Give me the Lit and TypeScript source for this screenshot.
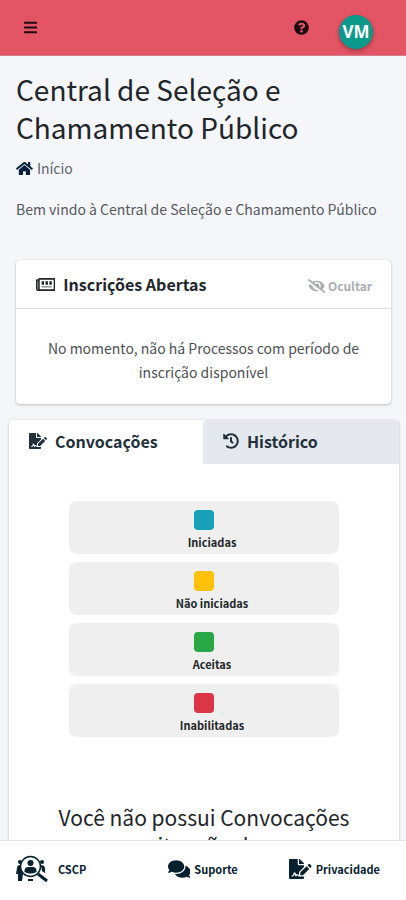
import { LitElement, html, css, svg } from "lit";
import { customElement, property, state } from "lit/decorators.js";
import { classMap } from "lit/directives/class-map.js";

const glyphs: Record<string, [string, string]> = {
  bars: ["0 0 448 512", "M16 132h416c8.837 0 16-7.163 16-16V76c0-8.837-7.163-16-16-16H16C7.163 60 0 67.163 0 76v40c0 8.837 7.163 16 16 16zm0 160h416c8.837 0 16-7.163 16-16v-40c0-8.837-7.163-16-16-16H16c-8.837 0-16 7.163-16 16v40c0 8.837 7.163 16 16 16zm0 160h416c8.837 0 16-7.163 16-16v-40c0-8.837-7.163-16-16-16H16c-8.837 0-16 7.163-16 16v40c0 8.837 7.163 16 16 16z"],
  help: ["0 0 512 512", "M504 256c0 136.997-111.043 248-248 248S8 392.997 8 256C8 119.083 119.043 8 256 8s248 111.083 248 248zM262.655 90c-54.497 0-89.255 22.957-116.549 63.758-3.536 5.286-2.353 12.415 2.715 16.258l34.699 26.31c5.205 3.947 12.621 3.008 16.665-2.122 17.864-22.658 30.113-35.797 57.303-35.797 20.429 0 45.698 13.148 45.698 32.958 0 14.976-12.363 22.667-32.534 33.976C247.128 238.528 216 254.941 216 296v4c0 6.627 5.373 12 12 12h56c6.627 0 12-5.373 12-12v-1.333c0-28.462 83.186-29.647 83.186-106.667 0-58.002-60.165-102-116.531-102zM256 338c-25.365 0-46 20.635-46 46 0 25.364 20.635 46 46 46s46-20.636 46-46c0-25.365-20.635-46-46-46z"],
  home: ["0 0 576 512", "M280.37 148.26L96 300.11V464a16 16 0 0 0 16 16l112.06-.29a16 16 0 0 0 15.92-16V368a16 16 0 0 1 16-16h64a16 16 0 0 1 16 16v95.64a16 16 0 0 0 16 16.05L464 480a16 16 0 0 0 16-16V300L295.67 148.26a12.19 12.19 0 0 0-15.3 0zM571.6 251.47L488 182.56V44.05a12 12 0 0 0-12-12h-56a12 12 0 0 0-12 12v72.61L318.47 43a48 48 0 0 0-61 0L4.34 251.47a12 12 0 0 0-1.6 16.9l25.5 31A12 12 0 0 0 45.15 301l235.22-193.74a12.19 12.19 0 0 1 15.3 0L530.9 301a12 12 0 0 0 16.9-1.6l25.5-31a12 12 0 0 0-1.7-16.93z"],
  news: ["0 0 576 448", "M552 32H112c-21 0-39 13.500-45.300 32.400H24c-13.300 0-24 10.700-24 24V360c0 30.900 25.100 56 56 56h496c13.300 0 24-10.700 24-24V56c0-13.300-10.700-24-24-24zM48 360V112h16v248c0 11-16 11-16 0zm480 8H111.400c.4-2.600.6-5.300.6-8V80h416v288zM168 128h72v104h-72V128zm116 0h72v104h-72V128zm116 0h72v104h-72V128zM168 284h304v24H168v-24z"],
  hide: ["0 0 640 512", "M320 400c-75.85 0-137.25-58.71-142.9-133.11L72.2 185.82c-13.79 17.3-26.48 35.59-36.72 55.59a32.35 32.35 0 0 0 0 29.19C89.71 376.41 197.07 448 320 448c26.91 0 52.87-4 77.89-10.46L346 397.39a144.13 144.13 0 0 1-26 2.61zm313.82 58.1l-110.55-85.44a331.25 331.25 0 0 0 81.25-102.07 32.35 32.35 0 0 0 0-29.19C550.29 135.59 442.93 64 320 64a308.15 308.15 0 0 0-147.32 37.7L45.46 3.37A16 16 0 0 0 23 6.18L3.37 31.45A16 16 0 0 0 6.18 53.9l588.36 454.73a16 16 0 0 0 22.46-2.81l19.64-25.27a16 16 0 0 0-2.82-22.45zm-183.72-142l-39.3-30.38A94.75 94.75 0 0 0 416 256a94.76 94.76 0 0 0-121.31-92.21A47.65 47.65 0 0 1 304 192a46.64 46.64 0 0 1-1.54 10l-73.61-56.89A142.31 142.31 0 0 1 320 112a143.92 143.92 0 0 1 144 144c0 21.63-5.29 41.79-13.9 60.11z"],
  sign: ["0 0 576 512", "M218.17 424.14c-2.95-5.92-8.09-6.52-10.17-6.52s-7.22.59-10.02 6.19l-7.67 15.34c-6.37 12.78-25.03 11.37-29.48-2.09L144 386.59l-10.61 31.88c-5.89 17.66-22.38 29.53-41 29.53H80c-8.84 0-16-7.16-16-16s7.16-16 16-16h12.39c4.83 0 9.11-3.08 10.64-7.66l18.19-54.64c3.3-9.81 12.44-16.41 22.78-16.41s19.48 6.59 22.77 16.41l13.88 41.64c19.75-16.19 54.06-9.7 66 14.16 1.89 3.78 5.49 5.95 9.36 6.26v-82.12l128-127.09V160H248c-13.2 0-24-10.8-24-24V0H24C10.7 0 0 10.7 0 24v464c0 13.3 10.7 24 24 24h336c13.3 0 24-10.7 24-24v-40l-128-.11c-16.12-.31-30.58-9.28-37.83-23.75zM384 121.9c0-6.3-2.5-12.4-7-16.9L279.1 7c-4.5-4.5-10.6-7-17-7H256v128h128v-6.1zm-96 225.06V416h68.99l161.68-162.78-67.88-67.88L288 346.96zm280.54-179.63l-31.87-31.87c-9.94-9.94-26.07-9.94-36.01 0l-27.25 27.25 67.88 67.88 27.25-27.25c9.95-9.94 9.95-26.07 0-36.01z"],
  history: ["0 0 512 512", "M504 255.531c.253 136.64-111.18 248.372-247.82 248.468-59.015.042-113.223-20.53-155.822-54.911-11.077-8.94-11.905-25.541-1.839-35.607l11.267-11.267c8.609-8.609 22.353-9.551 31.891-1.984C173.062 425.135 212.781 440 256 440c101.705 0 184-82.311 184-184 0-101.705-82.311-184-184-184-48.814 0-93.149 18.969-126.068 49.932l50.754 50.754c10.08 10.08 2.941 27.314-11.313 27.314H24c-8.837 0-16-7.163-16-16V38.627c0-14.254 17.234-21.393 27.314-11.314l49.372 49.372C129.209 34.136 189.552 8 256 8c136.81 0 247.747 110.78 248 247.531zm-180.912 78.784l9.823-12.63c8.138-10.463 6.253-25.542-4.21-33.679L288 256.349V152c0-13.255-10.745-24-24-24h-16c-13.255 0-24 10.745-24 24v135.651l65.409 50.874c10.463 8.137 25.541 6.253 33.679-4.21z"],
  chat: ["0 0 576 512", "M416 192c0-88.4-93.1-160-208-160S0 103.6 0 192c0 34.3 14.1 65.9 38 92-13.4 30.2-35.5 54.2-35.8 54.5-2.2 2.3-2.8 5.7-1.5 8.7S4.8 352 8 352c36.6 0 66.9-12.3 88.7-25 32.2 15.7 70.3 25 111.3 25 114.9 0 208-71.6 208-160zm122 220c23.9-26 38-57.7 38-92 0-66.9-53.5-124.2-129.3-148.1.9 6.6 1.3 13.3 1.3 20.1 0 105.9-107.7 192-240 192-10.8 0-21.3-.8-31.7-1.9C207.8 439.6 281.8 480 368 480c41 0 79.1-9.2 111.3-25 21.8 12.7 52.1 25 88.7 25 3.2 0 6.1-1.9 7.3-4.8 1.3-2.9.7-6.3-1.5-8.7-.3-.3-22.4-24.2-35.8-54.5z"],
};

@customElement("app-icon")
class AppIcon extends LitElement {
  static styles = css`
    :host { display: inline-flex; flex: none; }
    svg { display: block; height: 100%; fill: currentColor; }
  `;
  @property() name = "";
  render() {
    const [box, d] = glyphs[this.name];
    return html`<svg viewBox=${box} aria-hidden="true">${svg`<path fill-rule="evenodd" d=${d}></path>`}</svg>`;
  }
}

const statuses = [
  ["Iniciadas", "info"],
  ["Não iniciadas", "warning"],
  ["Aceitas", "success"],
  ["Inabilitadas", "danger"],
];

@customElement("app-root")
class AppRoot extends LitElement {
  @state() tab = 0;
  @state() collapsed = false;

  static styles = css`
    :host {
      display: flex;
      flex-direction: column;
      height: 100vh;
      background: #f4f6f9;
      color: #212529;
      font-family: "Noto Sans CJK SC", "Noto Sans", sans-serif;
      font-size: 14px;
      line-height: 24px;
    }
    * { box-sizing: border-box; }
    button { border: 0; margin: 0; padding: 0; background: none; color: inherit; font: inherit; cursor: pointer; }
    a { color: inherit; text-decoration: none; }
    h1, h2, p, ul { margin: 0; padding: 0; font-weight: 400; }
    header {
      flex: none;
      display: flex;
      align-items: center;
      height: 56px;
      padding: 2px 33px 0 24px;
      background: #e35465;
      border-bottom: 1px solid #d3808c;
      color: #1c0a10;
    }
    .menu { margin-right: auto; }
    .i14 { height: 14px; }
    .i15 { height: 15px; }
    .i16 { height: 16px; }
    .i20 { height: 20px; }
    .avatar {
      display: grid;
      place-items: center;
      width: 34px;
      height: 34px;
      margin: 6px 0 0 30px;
      border-radius: 50%;
      background: #0a998a;
      color: #fff;
      font: 700 17px/34px "Noto Sans", sans-serif;
      box-shadow: 0 2px 4px #0005;
    }
    main { flex: 1; min-height: 0; overflow-y: auto; scrollbar-width: none; }
    .intro { padding: 14px 16px 0; }
    h1 { font-size: 28px; line-height: 38px; }
    .crumb { display: flex; align-items: center; gap: 4px; margin-top: 10px; color: #5d646b; }
    .crumb app-icon { color: #06203a; }
    .welcome { margin-top: 17px; color: #55595e; }
    .card { background: #fff; border-radius: 4px; box-shadow: 0 0 1px #0003, 0 1px 3px #0003; }
    .open { margin: 39px 15px 0 16px; }
    .card-head {
      display: flex;
      align-items: center;
      justify-content: space-between;
      height: 49px;
      padding: 0 19px 0 20px;
      border-bottom: 1px solid #dfe1e4;
    }
    .card-head h2 { display: flex; align-items: center; gap: 8px; font-size: 16px; font-weight: 700; }
    .toggle { display: flex; align-items: center; gap: 2px; padding-top: 4px; color: #a9adb1; font-size: 12px; font-weight: 700; }
    .card-text { padding: 27px 24px 20px; text-align: center; color: #4c5054; }
    .calls { margin: 16px 7px 0 9px; }
    .tabs { display: grid; grid-template-columns: 194px 1fr; height: 44px; }
    .tab {
      display: flex;
      align-items: center;
      gap: 8px;
      padding: 0 0 2px 20px;
      border-radius: 4px 4px 0 0;
      background: #e5e9ef;
      color: #22303a;
      font-size: 16px;
      font-weight: 700;
    }
    .tab.on { background: #fff; }
    .list { display: grid; gap: 8px; padding: 37px 60px 0; list-style: none; }
    .status {
      display: flex;
      flex-direction: column;
      align-items: center;
      width: 100%;
      height: 53px;
      padding-top: 9px;
      border-radius: 8px;
      background: #efefef;
      font-size: 11px;
      line-height: 24px;
      font-weight: 700;
    }
    .status span { padding-left: 16px; }
    .dot { width: 20px; height: 20px; border-radius: 4px; }
    .info { background: #17a2b8; }
    .warning { background: #ffc107; }
    .success { background: #28a745; }
    .danger { background: #dc3545; }
    .empty { padding: 66px 40px 40px; text-align: center; font-size: 21px; line-height: 28px; }
    nav {
      flex: none;
      display: grid;
      grid-template-columns: 5fr 4fr auto;
      height: 60px;
      padding: 0 26px 4px 16px;
      border-top: 1px solid #e3e5e8;
      background: #fff;
      color: #06202f;
      font-size: 11px;
      font-weight: 700;
    }
    nav a { display: flex; align-items: center; gap: 4px; }
    nav .brand { gap: 10px; }
    .logo { width: 32px; height: 28px; }
  `;

  render() {
    return html`
      <header>
        <button class="menu" aria-label="Menu"><app-icon class="i15" name="bars"></app-icon></button>
        <button aria-label="Ajuda"><app-icon class="i15" name="help"></app-icon></button>
        <button class="avatar">VM</button>
      </header>
      <main>
        <div class="intro">
          <h1>Central de Seleção e Chamamento Público</h1>
          <a class="crumb" href="#"><app-icon class="i15" name="home"></app-icon>Início</a>
          <p class="welcome">Bem vindo à Central de Seleção e Chamamento Público</p>
        </div>
        <section class="card open">
          <div class="card-head">
            <h2><app-icon class="i15" name="news"></app-icon>Inscrições Abertas</h2>
            <button class="toggle" @click=${() => (this.collapsed = !this.collapsed)}>
              <app-icon class="i14" name="hide"></app-icon>Ocultar
            </button>
          </div>
          ${this.collapsed ? "" : html`<p class="card-text">No momento, não há Processos com período de inscrição disponível</p>`}
        </section>
        <section class="card calls">
          <div class="tabs" role="tablist">
            ${[["Convocações", "sign"], ["Histórico", "history"]].map(
              ([label, icon], i) => html`<button
                role="tab"
                aria-selected=${i === this.tab}
                class=${classMap({ tab: true, on: i === this.tab })}
                @click=${() => (this.tab = i)}
              ><app-icon class="i16" name=${icon}></app-icon>${label}</button>`
            )}
          </div>
          <ul class="list">
            ${statuses.map(([label, tone]) => html`<li>
              <button class="status"><i class="dot ${tone}"></i><span>${label}</span></button>
            </li>`)}
          </ul>
          <h2 class="empty">Você não possui Convocações<br />situação de</h2>
        </section>
      </main>
      <nav>
        <a class="brand" href="#">
          <svg class="logo" viewBox="0 0 32 28" fill="currentColor" aria-hidden="true">
            <circle cx="4" cy="7" r="2"></circle>
            <circle cx="26" cy="7" r="2"></circle>
            <path d="M1 13q0-3 3-3l1 5 2 4-1 7H2v-7H0zM25 10q4 0 4 4v4l-3-2z"></path>
            <circle cx="14.500" cy="11.500" r="10" fill="#fff" stroke="currentColor" stroke-width="1.500"></circle>
            <circle cx="14.500" cy="8" r="3"></circle>
            <path d="M8.500 17v-1q0-4 4-4h4q4 0 4 4v1q-6 3-12 0zM12 24h5v2h-5z"></path>
            <path d="M22 19l9 7" stroke="currentColor" stroke-width="3"></path>
          </svg>CSCP</a>
        <a href="#"><app-icon class="i20" name="chat"></app-icon>Suporte</a>
        <a href="#"><app-icon class="i20" name="sign"></app-icon>Privacidade</a>
      </nav>
    `;
  }
}
